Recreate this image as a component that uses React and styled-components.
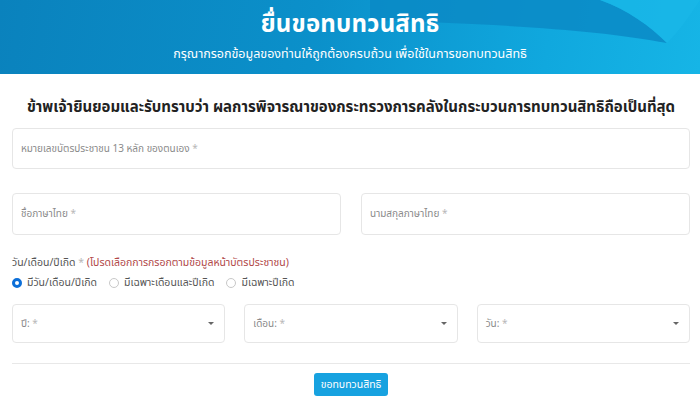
import React from 'react';
import styled, { createGlobalStyle } from 'styled-components';

const GlobalStyle = createGlobalStyle`
    html, body {
        margin: 0;
        padding: 0;
        background: #ffffff;
    }
    body {
        font-family: "Noto Sans", "Noto Sans Thai", "Liberation Sans", sans-serif;
        color: #333;
    }
    * { box-sizing: border-box; }
`;

const Header = styled.header`
    position: relative;
    height: 74px;
    overflow: hidden;
    background: linear-gradient(100deg, #0a82bd 0%, #0b90ca 45%, #10a8de 78%, #16b5e6 100%);
    display: flex;
    flex-direction: column;
    align-items: center;
    color: #fff;
`;

const Wave = styled.svg`
    position: absolute;
    inset: 0;
    width: 100%;
    height: 100%;
`;

const HeaderText = styled.div`
    position: relative;
    display: flex;
    flex-direction: column;
    align-items: center;
    padding-top: 5px;
`;

const Title = styled.h1`
    margin: 0;
    font-size: 24px;
    font-weight: 700;
    line-height: 36px;
    letter-spacing: 0.2px;
`;

const Subtitle = styled.p`
    margin: 4px 0 0;
    font-size: 12.5px;
    line-height: 18px;
`;

const Card = styled.main`
    padding: 19px 10px 0 12px;
`;

const Notice = styled.h2`
    margin: 0 0 9px;
    text-align: center;
    font-size: 15px;
    font-weight: 700;
    line-height: 26px;
    color: #222;
`;

const Field = styled.div`
    height: ${p => p.$h || 41}px;
    border: 1px solid #e6e6e6;
    border-radius: 4px;
    display: flex;
    align-items: center;
    padding: 0 10px 0 8px;
    font-size: 10px;
    color: #8a8a8a;
    justify-content: space-between;
    background: #fff;
`;

const Star = styled.span`
    color: #b8b8b8;
`;

const Row = styled.div`
    display: grid;
    grid-template-columns: repeat(${p => p.$cols}, 1fr);
    column-gap: ${p => p.$gap}px;
    margin-top: ${p => p.$top}px;
`;

const Label = styled.div`
    margin-top: 19px;
    font-size: 10.5px;
    color: #555;
    line-height: 16px;
`;

const Note = styled.span`
    color: #b14848;
`;

const Radios = styled.div`
    display: flex;
    align-items: center;
    gap: 12px;
    margin-top: 5px;
    font-size: 10.5px;
    color: #555;
`;

const RadioItem = styled.label`
    display: flex;
    align-items: center;
    gap: 5px;
`;

const Dot = styled.span`
    width: 10px;
    height: 10px;
    border-radius: 50%;
    border: ${p => p.$on ? '3px solid #0d6fd8' : '1px solid #c8c8c8'};
    background: #fff;
`;

const Caret = styled.span`
    width: 0;
    height: 0;
    border-left: 3px solid transparent;
    border-right: 3px solid transparent;
    border-top: 3.5px solid #666;
`;

const Divider = styled.hr`
    margin: 20px 0 0;
    border: 0;
    border-top: 1px solid #e8e8e8;
`;

const Footer = styled.div`
    display: flex;
    justify-content: center;
    padding-top: 9px;
`;

const Button = styled.button`
    height: 23px;
    padding: 0 7px;
    border: 0;
    border-radius: 3px;
    background: #17a2e0;
    color: #fff;
    font-family: inherit;
    font-size: 10.5px;
    cursor: pointer;
`;

const Select = ({ label }) => (
    <Field $h={39}>
        <span>{label} <Star>*</Star></span>
        <Caret />
    </Field>
);

export default function App() {
    return (
        <>
            <GlobalStyle />
            <Header>
                <Wave viewBox="0 0 700 74" preserveAspectRatio="none">
                    <path d="M370 0 L 600 0 C 628 10 650 26 667 43 C 600 30 500 24 370 20 Z" fill="#0a8ac5" opacity="0.85" />
                    <path d="M600 0 C 628 10 650 26 667 43 C 680 30 690 15 700 0 Z" fill="#1ab8e8" opacity="0.7" />
                </Wave>
                <HeaderText>
                    <Title>ยื่นขอทบทวนสิทธิ</Title>
                    <Subtitle>กรุณากรอกข้อมูลของท่านให้ถูกต้องครบถ้วน เพื่อใช้ในการขอทบทวนสิทธิ</Subtitle>
                </HeaderText>
            </Header>
            <Card>
                <Notice>ข้าพเจ้ายินยอมและรับทราบว่า ผลการพิจารณาของกระทรวงการคลังในกระบวนการทบทวนสิทธิถือเป็นที่สุด</Notice>
                <Field>
                    <span>หมายเลขบัตรประชาชน 13 หลัก ของตนเอง <Star>*</Star></span>
                </Field>
                <Row $cols={2} $gap={20} $top={24}>
                    <Field $h={42}><span>ชื่อภาษาไทย <Star>*</Star></span></Field>
                    <Field $h={42}><span>นามสกุลภาษาไทย <Star>*</Star></span></Field>
                </Row>
                <Label>วัน/เดือน/ปีเกิด <Star>*</Star> <Note>(โปรดเลือกการกรอกตามข้อมูลหน้าบัตรประชาชน)</Note></Label>
                <Radios>
                    <RadioItem><Dot $on />มีวัน/เดือน/ปีเกิด</RadioItem>
                    <RadioItem><Dot />มีเฉพาะเดือนและปีเกิด</RadioItem>
                    <RadioItem><Dot />มีเฉพาะปีเกิด</RadioItem>
                </Radios>
                <Row $cols={3} $gap={19} $top={13}>
                    <Select label="ปี:" />
                    <Select label="เดือน:" />
                    <Select label="วัน:" />
                </Row>
                <Divider />
                <Footer>
                    <Button>ขอทบทวนสิทธิ</Button>
                </Footer>
            </Card>
        </>
    );
}
